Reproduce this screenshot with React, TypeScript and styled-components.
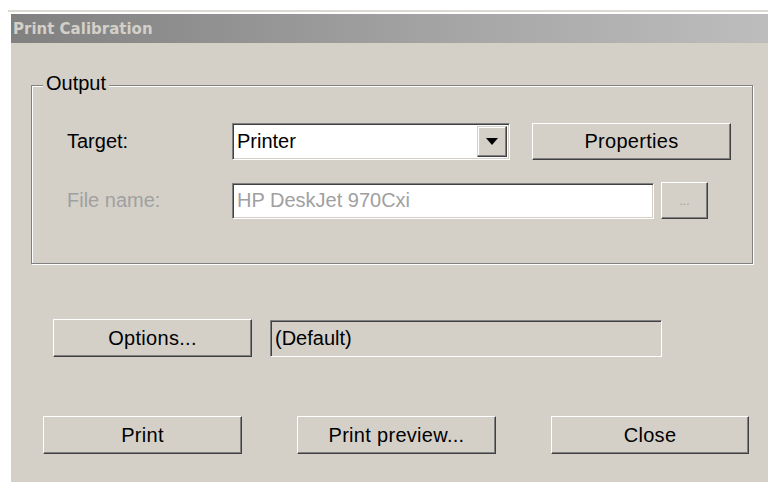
import React from 'react';
import styled, { createGlobalStyle } from 'styled-components';

const GlobalStyle = createGlobalStyle`
  html, body {
    margin: 0;
    padding: 0;
    background: #ffffff;
  }
  body {
    font-family: "Liberation Sans", Arial, sans-serif;
    overflow: hidden;
  }
`;

const face = '#d4d0c8';

const Frame = styled.div`
  margin: 10px 0 0 8px;
  border-top: 2px solid #dcd9d2;
  padding: 2px 0 0 3px;
  height: calc(100vh - 10px);
  box-sizing: border-box;
  display: flex;
  flex-direction: column;
`;

const TitleBar = styled.div`
  height: 29px;
  flex-shrink: 0;
  display: flex;
  align-items: center;
  padding-left: 2px;
  background: linear-gradient(to right, #808080 0%, #a6a6a6 60%, #bdbdbd 100%);
  font-family: "DejaVu Sans", Verdana, sans-serif;
  font-weight: bold;
  font-size: 15px;
  color: ${face};
`;

const Body = styled.div`
  flex: 1;
  background: ${face};
  padding: 42px 0 0 20px;
  display: flex;
  flex-direction: column;
`;

const GroupBox = styled.div`
  position: relative;
  width: 722px;
  height: 179px;
  box-sizing: border-box;
  border: 1px solid #808080;
  box-shadow: inset 1px 1px #ffffff, 1px 1px #ffffff;
  padding: 37px 0 0 35px;
  display: flex;
  flex-direction: column;
  gap: 22px;
`;

const GroupLabel = styled.span`
  position: absolute;
  top: -14px;
  left: 11px;
  padding: 0 3px;
  background: ${face};
  font-size: 20px;
  color: #000;
`;

const Row = styled.div<{ $gap?: number }>`
  display: flex;
  align-items: center;
  gap: ${({ $gap }) => $gap ?? 0}px;
`;

const Label = styled.span<{ $disabled?: boolean }>`
  width: 165px;
  font-size: 20px;
  color: ${({ $disabled }) => ($disabled ? '#a0a0a0' : '#000')};
`;

const Button = styled.button<{ $w: number; $h?: number; $disabled?: boolean }>`
  width: ${({ $w }) => $w}px;
  height: ${({ $h }) => $h ?? 38}px;
  box-sizing: border-box;
  padding: 0;
  background: ${face};
  border: 1px solid;
  border-color: #ffffff #404040 #404040 #ffffff;
  box-shadow: inset -1px -1px #808080, inset 1px 1px ${face};
  font-family: "Liberation Sans", Arial, sans-serif;
  font-size: ${({ $disabled }) => ($disabled ? 12 : 20)}px;
  letter-spacing: ${({ $disabled }) => ($disabled ? 0 : 0.3)}px;
  color: ${({ $disabled }) => ($disabled ? '#a0a0a0' : '#000')};
`;

const Sunken = styled.div<{ $w: number; $h: number; $bg?: string }>`
  width: ${({ $w }) => $w}px;
  height: ${({ $h }) => $h}px;
  box-sizing: border-box;
  display: flex;
  align-items: center;
  background: ${({ $bg }) => $bg ?? '#ffffff'};
  border: 1px solid;
  border-color: #808080 #ffffff #ffffff #808080;
  box-shadow: inset 1px 1px #404040, inset -1px -1px ${face};
  font-size: 20px;
`;

const FieldText = styled.span<{ $muted?: boolean }>`
  flex: 1;
  padding-left: 4px;
  color: ${({ $muted }) => ($muted ? '#a0a0a0' : '#000')};
  white-space: nowrap;
`;

const DropButton = styled.div`
  width: 30px;
  height: 31px;
  margin-right: 2px;
  box-sizing: border-box;
  display: flex;
  align-items: center;
  justify-content: center;
  background: ${face};
  border: 1px solid;
  border-color: ${face} #404040 #404040 ${face};
  box-shadow: inset -1px -1px #808080, inset 1px 1px #ffffff;
`;

const OptionsRow = styled(Row)`
  margin: 55px 0 0 22px;
  gap: 18px;
`;

const ActionRow = styled(Row)`
  margin: 59px 0 0 12px;
  gap: 55px;
`;

export default function App() {
  return (
    <>
      <GlobalStyle />
      <Frame>
        <TitleBar>Print Calibration</TitleBar>
        <Body>
          <GroupBox>
            <GroupLabel>Output</GroupLabel>
            <Row>
              <Label>Target:</Label>
              <Row $gap={22}>
                <Sunken $w={278} $h={37}>
                  <FieldText>Printer</FieldText>
                  <DropButton>
                    <svg width="12" height="7" viewBox="0 0 12 7">
                      <path d="M0 0h12L6 7z" fill="#000" />
                    </svg>
                  </DropButton>
                </Sunken>
                <Button $w={199} $h={37}>Properties</Button>
              </Row>
            </Row>
            <Row>
              <Label $disabled>File name:</Label>
              <Row $gap={7}>
                <Sunken $w={422} $h={36}>
                  <FieldText $muted>HP DeskJet 970Cxi</FieldText>
                </Sunken>
                <Button $w={47} $h={37} $disabled>...</Button>
              </Row>
            </Row>
          </GroupBox>

          <OptionsRow>
            <Button $w={199}>Options...</Button>
            <Sunken $w={392} $h={37} $bg={face}>
              <FieldText>(Default)</FieldText>
            </Sunken>
          </OptionsRow>

          <ActionRow>
            <Button $w={199}>Print</Button>
            <Button $w={199}>Print preview...</Button>
            <Button $w={198}>Close</Button>
          </ActionRow>
        </Body>
      </Frame>
    </>
  );
}
